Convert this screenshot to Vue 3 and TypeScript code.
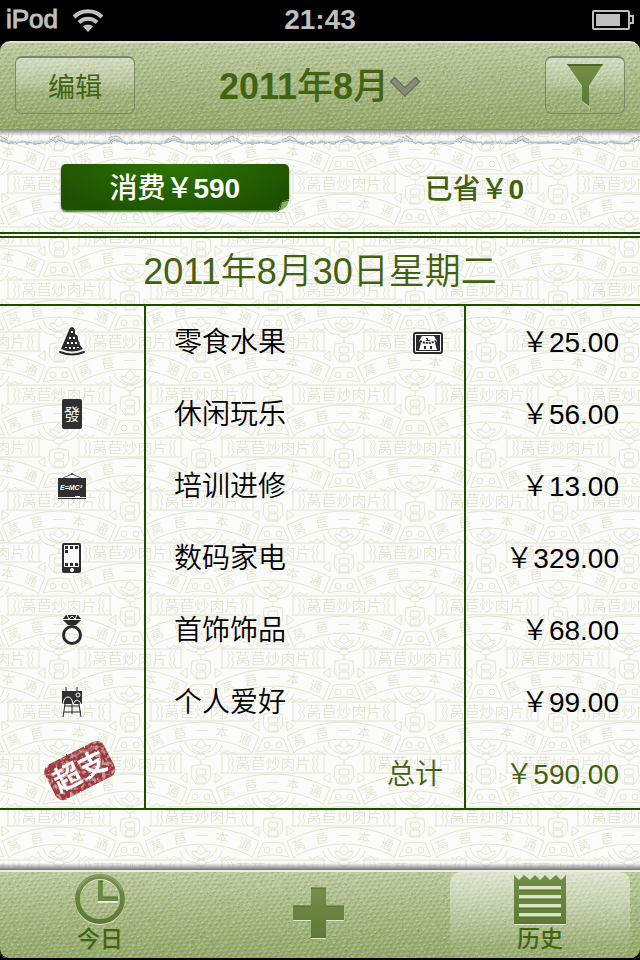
<script setup lang="ts">
interface Entry {
  icon: string
  name: string
  amount: string
  badge?: boolean
}

const entries: Entry[] = [
  { icon: 'melon', name: '零食水果', amount: '25.00', badge: true },
  { icon: 'tile', name: '休闲玩乐', amount: '56.00' },
  { icon: 'board', name: '培训进修', amount: '13.00' },
  { icon: 'phone', name: '数码家电', amount: '329.00' },
  { icon: 'ring', name: '首饰饰品', amount: '68.00' },
  { icon: 'easel', name: '个人爱好', amount: '99.00' },
]

// Motif positions inside one 285x211 paper tile; every second row shifts by half a motif.
const motifs: { x: number; y: number }[] = []
for (let row = -1; row <= 4; row++) {
  for (let col = -1; col <= 2; col++) {
    motifs.push({
      x: Math.round(col * 142.5 + (row % 2 === 0 ? 0 : 71)),
      y: Math.round(row * 52.75),
    })
  }
}
</script>

<template>
  <div class="app">
    <svg class="defs" aria-hidden="true">
      <defs>
        <filter id="weave" x="0" y="0" width="100%" height="100%">
          <feTurbulence type="fractalNoise" baseFrequency="0.12 0.18" numOctaves="2" seed="4" result="n" />
          <feDisplacementMap in="SourceGraphic" in2="n" scale="3" />
        </filter>
        <pattern id="cloth" width="6" height="8" patternUnits="userSpaceOnUse" patternTransform="rotate(-4)">
          <path d="M0 2.500L2.600 1M3 6.500L5.600 5" stroke="#fff" stroke-opacity=".32" stroke-width="1.300" />
          <path d="M0.500 4.200L3.200 2.600M3.500 8L6 6.600" stroke="#4f6a22" stroke-opacity=".3" stroke-width="1.200" />
        </pattern>
        <filter id="rough" x="-5%" y="-5%" width="110%" height="110%">
          <feTurbulence type="fractalNoise" baseFrequency="0.25" numOctaves="2" seed="8" result="n" />
          <feDisplacementMap in="SourceGraphic" in2="n" scale="2" result="d" />
          <feColorMatrix in="n" type="matrix" values="0 0 0 0 1  0 0 0 0 1  0 0 0 0 1  4 3 0 0 -3.400" result="s" />
          <feComposite in="s" in2="d" operator="in" result="spots" />
          <feComponentTransfer in="spots" result="soft"><feFuncA type="linear" slope=".3" /></feComponentTransfer>
          <feMerge><feMergeNode in="d" /><feMergeNode in="soft" /></feMerge>
        </filter>
        <filter id="fray" x="0" y="-20%" width="100%" height="140%">
          <feTurbulence type="fractalNoise" baseFrequency="0.2" numOctaves="2" seed="2" result="n" />
          <feDisplacementMap in="SourceGraphic" in2="n" scale="4" />
        </filter>
        <linearGradient id="engrave" x1="0" y1="0" x2="0" y2="1">
          <stop offset="0" stop-color="#738f49" />
          <stop offset="1" stop-color="#5c7a35" />
        </linearGradient>
      </defs>
    </svg>

    <header class="status">
      <div class="carrier">
        <span>iPod</span>
        <svg width="32" height="24" viewBox="0 0 32 24" role="img" aria-label="Wi-Fi">
          <g fill="none" stroke="#bfbfbf" stroke-width="4">
            <path d="M2 9a20 20 0 0 1 28 0" />
            <path d="M7 14.500a12.500 12.500 0 0 1 18 0" />
          </g>
          <path d="M11 18.500a7 7 0 0 1 10 0L16 24z" fill="#bfbfbf" />
        </svg>
      </div>
      <time class="clock">21:43</time>
      <svg class="battery" width="42" height="20" viewBox="0 0 42 20" role="img" aria-label="Battery">
        <rect x="1" y="1" width="36" height="18" rx="1" fill="none" stroke="#bfbfbf" stroke-width="2" />
        <rect x="4" y="4" width="24" height="12" fill="#bfbfbf" />
        <path d="M38 6h3v7h-3" fill="none" stroke="#bfbfbf" stroke-width="2" />
      </svg>
    </header>

    <nav class="bar top">
      <svg class="cloth" aria-hidden="true"><rect width="100%" height="100%" fill="url(#cloth)" filter="url(#weave)" /></svg>
      <button class="tool edit" type="button">编辑</button>
      <h1 class="title">
        <button class="month" type="button">
          <span><b>2011</b>年<b>8</b>月</span>
          <svg width="32" height="24" viewBox="0 0 32 24" aria-hidden="true">
            <path d="M3 4L16 17L29 4" fill="none" stroke="#62685a" stroke-width="7" />
            <path d="M4 5L16 17L28 5" fill="none" stroke="#868a7c" stroke-width="5" />
          </svg>
        </button>
      </h1>
      <button class="tool filter" type="button" aria-label="筛选">
        <svg width="36" height="46" viewBox="0 0 36 46" aria-hidden="true">
          <path d="M0 2H36L22 24V44L15 39V24Z" fill="#d3deb9" />
          <path d="M0 1H36L22 23V43L15 38V23Z" fill="url(#engrave)" />
          <path d="M0 1H36L35 3H1Z" fill="#4c6628" />
        </svg>
      </button>
    </nav>

    <main class="paper">
      <svg class="motif" aria-hidden="true">
        <defs>
          <g id="unit">
            <g fill="none" stroke="#e1e5d2" stroke-width="1">
              <path d="M-53 0H53M-53 19H53M-51 0v19M51 0v19M-46 2q4 3 1 8q3 5 -1 8M-42 2q4 3 1 8q3 5 -1 8M46 2q-4 3 -1 8q-3 5 1 8M42 2q-4 3 -1 8q-3 5 1 8" />
              <path d="M-57 34Q0 6 57 34M-47 48Q0 26 47 48M-57 34L-50 51L-47 48M57 34L50 51L47 48" />
              <path d="M62 12q9 -3 18 0l1 11l-5 7h-10l-5 -7zM67 15h8l1 3l-1 3h-8l-1 -3zM67 23h8l1 3l-1 3h-8l-1 -3zM57 19v10l-7 -5zM85 19v10l7 -5z" />
              <ellipse cx="71" cy="3" rx="5" ry="3" />
              <path d="M71 6v5M50 -9q3 11 16 12M92 -9q-3 11 -16 12M55 -12q3 11 16 12q13 -1 16 -12M71 -1q-10 -3 -9 -8q5 0 9 4q4 -4 9 -4q1 5 -9 8M66 -8q1 -4 5 -7q4 3 5 7" />
              <path d="M36 -3q4 5 8 -1q4 5 9 0M106 -3q-4 5 -8 -1q-4 5 -9 0" />
              <path d="M71 35L61 36L55 50Q71 46 87 50L81 36Z" />
              <circle cx="65" cy="43" r="3" /><circle cx="77" cy="43" r="3" />
            </g>
            <g class="motif-text">
              <text x="0" y="15" font-size="15">莴苣炒肉片</text>
              <text x="-45" y="43" font-size="13" transform="rotate(-20 -45 38)">莴</text>
              <text x="-22" y="36" font-size="13" transform="rotate(-9 -22 31)">苣</text>
              <text x="0" y="33" font-size="13">一</text>
              <text x="20" y="35" font-size="13" transform="rotate(9 20 30)">本</text>
              <text x="43" y="42" font-size="13" transform="rotate(20 43 37)">通</text>
            </g>
          </g>
          <pattern id="paper" width="285" height="211" patternUnits="userSpaceOnUse" patternTransform="translate(59 45)">
            <use v-for="(m, i) in motifs" :key="i" href="#unit" :x="m.x" :y="m.y" />
          </pattern>
        </defs>
        <rect width="100%" height="100%" fill="url(#paper)" />
      </svg>

      <svg class="thread" width="100%" height="16" aria-hidden="true">
        <defs>
          <pattern id="strand" width="58" height="16" patternUnits="userSpaceOnUse">
            <path d="M0 7Q8 12 20 11T44 11Q52 10 58 7" fill="none" stroke="#d3dada" stroke-width="4" />
            <path d="M0 6Q8 10 20 9T44 9Q52 8 58 6" fill="none" stroke="#f3f6f5" stroke-width="2" />
            <path d="M0 9Q8 13 20 12T44 13Q52 12 58 9M0 5L7 9M50 9L58 5" fill="none" stroke="#a4b0b1" stroke-width="1" />
          </pattern>
        </defs>
        <rect width="100%" height="16" fill="url(#strand)" filter="url(#fray)" />
      </svg>

      <div class="summary">
        <button class="spent" type="button">
          消费￥<b>590</b>
          <svg class="curl" width="12" height="13" viewBox="0 0 12 13" aria-hidden="true">
            <path d="M0 13L3 4Q3 2 12 0V13Z" fill="#fafafa" />
            <path d="M0 12Q3 10 3 3Q6 2 11 1Q10 10 0 12Z" fill="#7fb65c" />
            <path d="M0 12Q3 10 3 3Q6 2 11 1" fill="none" stroke="#174200" stroke-width="1" />
          </svg>
        </button>
        <button class="saved" type="button">已省￥<b>0</b></button>
      </div>

      <section class="day">
        <h2>2011年8月30日星期二</h2>
        <table>
          <tbody>
            <tr v-for="e in entries" :key="e.name">
              <td class="kind">
                <svg v-if="e.icon === 'melon'" width="30" height="32" viewBox="0 0 30 32" aria-hidden="true">
                  <path d="M15 1Q17 1 18 4V8Q21 9 21 12V14Q23 16 23 19L26 23Q15 28 4 23L12 4Q13 1 15 1Z" fill="#2b2b2b" />
                  <path d="M3 26Q15 31 27 26" fill="none" stroke="#2b2b2b" stroke-width="2" stroke-linecap="round" />
                  <path d="M15 5v2M13 11v2M17 11v2M11 16v2M15 16v2M19 16v2M9 21v1M13 21v2M17 21v2M21 21v1" stroke="#fafafa" stroke-width="2" />
                </svg>
                <svg v-else-if="e.icon === 'tile'" width="30" height="32" viewBox="0 0 30 32" aria-hidden="true">
                  <rect x="5" y="1" width="20" height="30" rx="2" fill="#303030" />
                  <text class="glyph" x="15" y="22" font-size="16">發</text>
                </svg>
                <svg v-else-if="e.icon === 'board'" width="30" height="32" viewBox="0 0 30 32" aria-hidden="true">
                  <path d="M6 8L15 4L24 8" fill="none" stroke="#555" stroke-width="1" />
                  <circle cx="15" cy="4" r="1" fill="#333" />
                  <path d="M1 8H29V27H1ZM1 28H29V29H1Z" fill="#303030" />
                  <path d="M18 26h5v1h-5z" fill="#fff" />
                  <text class="formula" x="3" y="20" font-size="7">E=MC²</text>
                </svg>
                <svg v-else-if="e.icon === 'phone'" width="30" height="32" viewBox="0 0 30 32" aria-hidden="true">
                  <rect x="5" y="1" width="19" height="30" rx="2" fill="#2d2d2d" />
                  <rect x="7" y="3" width="15" height="22" fill="#fafafa" />
                  <path d="M8 4h3v3h-3zM13 4h3v3h-3zM18 4h3v3h-3zM8 8h3v3h-3zM8 21h3v3h-3zM13 21h3v3h-3zM18 21h3v3h-3z" fill="#2d2d2d" />
                  <circle cx="15" cy="28" r="2" fill="#fff" />
                </svg>
                <svg v-else-if="e.icon === 'ring'" width="30" height="32" viewBox="0 0 30 32" aria-hidden="true">
                  <circle cx="15" cy="21" r="8.500" fill="none" stroke="#2b2b2b" stroke-width="3" />
                  <path d="M9 1H21L24 5H6ZM6 6H24L19 11H11Z" fill="#2b2b2b" />
                  <path d="M10 1L12 5L15 2L18 5L20 1" fill="none" stroke="#fafafa" stroke-width="1" />
                </svg>
                <svg v-else width="30" height="32" viewBox="0 0 30 32" aria-hidden="true">
                  <path d="M9 1v5M20 1v5" stroke="#2b2b2b" stroke-width="1" />
                  <path d="M5 5H25V18H5Z" fill="#303030" />
                  <circle cx="21" cy="9" r="2" fill="none" stroke="#fff" stroke-width="1" />
                  <path d="M6 18Q7 11 11 11Q15 11 16 18M16 18Q18 14 20 14Q23 15 24 18" fill="none" stroke="#fff" stroke-width="1" />
                  <path d="M8 18L6 31M22 18L24 31M15 18V28M7 20H23M7 26H24" fill="none" stroke="#2b2b2b" stroke-width="1" />
                </svg>
              </td>
              <td class="name">
                <div class="cell">
                  <span>{{ e.name }}</span>
                  <svg v-if="e.badge" width="30" height="22" viewBox="0 0 30 22" aria-hidden="true">
                    <rect width="30" height="22" rx="3" fill="#2b2b2b" />
                    <rect x="2" y="2" width="26" height="18" rx="1" fill="#fafafa" />
                    <rect x="3" y="3" width="24" height="16" fill="#2b2b2b" />
                    <path d="M9 4H21L24 9L22 11L24 18H6L8 11L6 9Z" fill="#fafafa" />
                    <path d="M7 9Q15 13 23 9" fill="none" stroke="#2b2b2b" stroke-width="2" stroke-dasharray="2 1" />
                    <path d="M13 6h2v2h2v1h-4v-1h1v-1h-1zM11 14h2v3h-2zM17 14h2v3h-2z" fill="#2b2b2b" />
                  </svg>
                </div>
              </td>
              <td class="amount">￥{{ e.amount }}</td>
            </tr>
          </tbody>
          <tfoot>
            <tr>
              <td class="kind stamp">
                <svg width="76" height="66" viewBox="0 0 76 66" role="img" aria-label="超支">
                  <g filter="url(#rough)">
                    <g transform="rotate(-27 38 33)">
                      <rect x="5" y="13" width="66" height="39" rx="8" fill="#a0383c" />
                      <text class="seal" x="38" y="43" font-size="28">超支</text>
                    </g>
                  </g>
                </svg>
              </td>
              <td class="name total">总计</td>
              <td class="amount total">￥590.00</td>
            </tr>
          </tfoot>
        </table>
      </section>
    </main>

    <footer class="bar tabs">
      <svg class="cloth" aria-hidden="true"><rect width="100%" height="100%" fill="url(#cloth)" filter="url(#weave)" /></svg>
      <button class="tab" type="button">
        <svg width="52" height="52" viewBox="0 0 52 52" aria-hidden="true">
          <circle cx="26" cy="27" r="22.500" fill="none" stroke="#dfe8cb" stroke-width="5" />
          <circle cx="26" cy="26" r="22.500" fill="none" stroke="url(#engrave)" stroke-width="5" />
          <path d="M4 17A24 24 0 0 1 48 17" fill="none" stroke="#8b9b70" stroke-width="2" />
          <path d="M24 9H29V24H44V30H24Z" fill="#e3ebd0" />
          <path d="M24 8H29V24H44V28H24Z" fill="#6c8943" />
          <path d="M24 8H29M29 24H44" stroke="#4c6628" stroke-width="1" />
        </svg>
        <span>今日</span>
      </button>
      <button class="tab add" type="button" aria-label="添加">
        <svg width="52" height="52" viewBox="0 0 52 52" aria-hidden="true">
          <path d="M18 2H33V20H51V34H33V52H18V34H0V20H18Z" fill="#dfe8cb" />
          <path d="M18 1H33V19H51V33H33V51H18V33H0V19H18Z" fill="url(#engrave)" />
          <path d="M18 1H33M0 19H18M33 19H51" stroke="#4c6628" stroke-width="1" />
        </svg>
      </button>
      <button class="tab active" type="button" aria-current="page">
        <svg width="52" height="52" viewBox="0 0 52 52" aria-hidden="true">
          <path d="M0 3L5 8L10 3L16 8L21 3L26 8L31 3L36 8L42 3L47 8L52 3V52H0Z" fill="#e3ebd0" />
          <path d="M0 2L5 7L10 2L16 7L21 2L26 7L31 2L36 7L42 2L47 7L52 2V51H0Z" fill="url(#engrave)" />
          <path d="M5 15H47M5 24H47M5 33H47M5 42H47" stroke="#dce5c8" stroke-width="4" />
          <path d="M5 17H47M5 26H47M5 35H47M5 44H47" stroke="#4f6b29" stroke-width="1" />
        </svg>
        <span>历史</span>
      </button>
    </footer>
  </div>
</template>

<style>
body {
  margin: 0;
  background: #000;
}
</style>

<style scoped>
.app {
  display: flex;
  flex-direction: column;
  min-height: 100vh;
  box-sizing: border-box;
  padding-bottom: 2px;
  background: #000;
  color: #000;
  font-family: "Liberation Sans", "Noto Sans CJK SC", sans-serif;
  font-weight: 350;
}

.defs {
  position: absolute;
  width: 0;
  height: 0;
}

button {
  margin: 0;
  padding: 0;
  border: 0;
  background: none;
  color: inherit;
  font: inherit;
  cursor: pointer;
}

svg {
  display: block;
  flex: none;
}

.status {
  display: grid;
  grid-template-columns: 1fr auto 1fr;
  align-items: center;
  height: 41px;
  padding: 0 6px 2px;
  box-sizing: border-box;
  color: #bfbfbf;
}

.carrier {
  display: flex;
  align-items: center;
  gap: 14px;
  font-size: 26px;
  font-weight: 400;
  -webkit-text-stroke: 1px #bfbfbf;
}

.clock {
  font-size: 28px;
  font-weight: 700;
}

.battery {
  justify-self: end;
}

.bar {
  position: relative;
  isolation: isolate;
  height: 88px;
  box-sizing: border-box;
  background: linear-gradient(#bdca9f, #a6b782 50%, #92a768);
  color: #426410;
  text-shadow: 0 2px 0 #e6edd8;
  font-weight: 500;
}

.cloth {
  position: absolute;
  z-index: -1;
  inset: 0;
  width: 100%;
  height: 100%;
}

.top {
  display: grid;
  grid-template-columns: 1fr auto 1fr;
  align-items: center;
  padding: 0 15px 2px;
  overflow: hidden;
  border-top: 2px solid #dbe3c9;
  border-radius: 10px 10px 0 0;
}

.tool {
  display: flex;
  align-items: center;
  justify-content: center;
  height: 58px;
  box-sizing: border-box;
  border: 1px solid #7c8a62;
  border-top: 2px solid #7d8572;
  border-radius: 7px;
  background: linear-gradient(rgba(255, 255, 255, 0.4), rgba(255, 255, 255, 0.2) 45%, rgba(255, 255, 255, 0) 65%);
}

.edit {
  width: 120px;
  font-size: 27px;
  font-weight: 400;
}

.filter {
  justify-self: end;
  width: 80px;
}

.title {
  margin: 0;
  font-size: 36px;
  font-weight: 500;
}

.month {
  display: flex;
  align-items: center;
  padding-top: 4px;
  line-height: 52px;
}

.paper {
  position: relative;
  isolation: isolate;
  flex: 1;
  display: flex;
  flex-direction: column;
  padding-bottom: 40px;
  background: #fbfbfa;
  color: #426010;
}

.paper::before,
.paper::after {
  content: "";
  position: absolute;
  left: 0;
  right: 0;
  height: 7px;
}

.paper::before {
  top: 0;
  background: linear-gradient(#858585, rgba(133, 133, 133, 0));
}

.paper::after {
  bottom: 0;
  background: linear-gradient(rgba(110, 110, 120, 0), #77747c);
}

.motif {
  position: absolute;
  z-index: -1;
  inset: 0;
  width: 100%;
  height: 100%;
}

.motif-text {
  fill: #dde1cc;
  font-family: "Noto Sans CJK SC", sans-serif;
  font-weight: 300;
  text-anchor: middle;
}

.thread {
  margin-top: 2px;
}

.summary {
  display: grid;
  grid-template-columns: 1fr 1fr;
  gap: 72px;
  align-items: center;
  padding: 17px 52px 21px 61px;
  font-size: 28px;
  font-weight: 500;
}

.spent,
.saved {
  height: 47px;
  padding-bottom: 2px;
}

.spent {
  position: relative;
  border-bottom: 1px solid #3f8520;
  border-radius: 5px;
  background: radial-gradient(ellipse at 50% 0, #2f7500, #1d5000 85%);
  box-shadow: 0 1px 2px rgba(0, 0, 0, 0.6);
  color: #fff;
}

.curl {
  position: absolute;
  right: -1px;
  bottom: -2px;
}

.day {
  border-top: 2px solid #1f4d00;
  border-bottom: 2px solid #1f4d00;
}

.day h2 {
  margin: 2px 0 0;
  padding-top: 2px;
  border-top: 2px solid #1f4d00;
  border-bottom: 2px solid #1f4d00;
  font-size: 36px;
  font-weight: 350;
  line-height: 64px;
  text-align: center;
}

table {
  width: 100%;
  border-collapse: collapse;
  table-layout: fixed;
}

td {
  height: 72px;
  padding: 0;
  box-sizing: border-box;
  color: #000;
  font-size: 28px;
  line-height: 40px;
  vertical-align: middle;
}

.kind {
  width: 145px;
}

.kind svg {
  margin: 0 auto;
  overflow: visible;
}

.name {
  padding: 2px 21px 0 28px;
  border-left: 2px solid #1f4d00;
  border-right: 2px solid #1f4d00;
}

.cell {
  display: flex;
  align-items: center;
  justify-content: space-between;
}

.amount {
  width: 175px;
  padding: 2px 21px 0 0;
  text-align: right;
}

.stamp {
  padding: 0 0 4px 15px;
  vertical-align: top;
}

tfoot td {
  height: 70px;
}

.total {
  padding-top: 4px;
  color: #426010;
  text-align: right;
}

.glyph {
  fill: #fff;
  font-family: "Noto Sans CJK TC", sans-serif;
  font-weight: 400;
  text-anchor: middle;
}

.formula {
  fill: #fff;
  font-style: italic;
  font-weight: 700;
}

.seal {
  fill: #fff;
  font-family: "Noto Sans CJK SC", sans-serif;
  font-weight: 700;
  text-anchor: middle;
}

.tabs {
  display: grid;
  grid-template-columns: repeat(3, 1fr);
  gap: 40px;
  padding: 0 10px;
  border-top: 2px solid #e9eedd;
  border-radius: 0 0 9px 9px;
}

.tab {
  display: flex;
  flex-direction: column;
  align-items: center;
  padding-top: 1px;
  border-radius: 10px;
  font-size: 23px;
  line-height: 28px;
}

.add {
  justify-content: center;
  padding: 0 2px 4px 0;
}

.active {
  background: linear-gradient(rgba(255, 255, 255, 0.5), rgba(255, 255, 255, 0.05) 85%);
}
</style>
